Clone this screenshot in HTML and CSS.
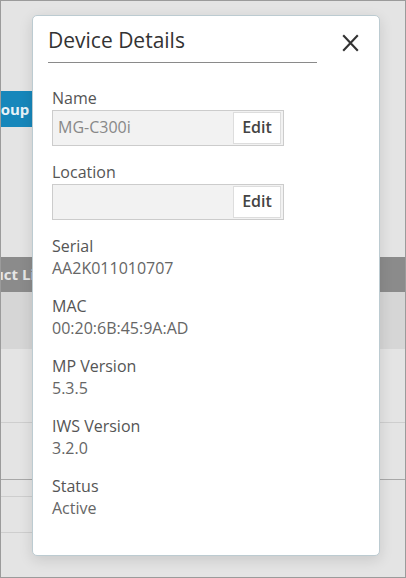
FILE: index.html
```html
<!DOCTYPE html>
<html lang="en">
<head>
<meta charset="utf-8">
<title>Device Details</title>
<link rel="stylesheet" href="styles.css">
</head>
<body>
<div class="page">
  <div class="toolbar"><button class="btn-group">Group</button></div>
  <div class="table">
    <div class="thead"><span class="th">Product Line</span></div>
    <div class="row row-hl"></div>
    <div class="row row-a"></div>
    <div class="row row-b"></div>
    <div class="foot foot1"></div>
    <div class="foot foot2"></div>
  </div>

  <div class="modal">
    <div class="modal-header">
      <h2 class="modal-title">Device Details</h2>
      <button class="close" aria-label="Close">
        <svg width="17" height="18" viewBox="0 0 17 18"><path d="M1.2 1.2 L15.8 16.8 M15.8 1.2 L1.2 16.8" stroke="#333" stroke-width="2.1" fill="none"/></svg>
      </button>
    </div>
    <div class="modal-body">
      <div class="field">
        <div class="label">Name</div>
        <div class="input"><span class="input-text">MG-C300i</span><button class="edit">Edit</button></div>
      </div>
      <div class="field">
        <div class="label">Location</div>
        <div class="input"><span class="input-text"></span><button class="edit">Edit</button></div>
      </div>
      <div class="detail"><div class="label">Serial</div><div class="value">AA2K011010707</div></div>
      <div class="detail"><div class="label">MAC</div><div class="value">00:20:6B:45:9A:AD</div></div>
      <div class="detail"><div class="label">MP Version</div><div class="value">5.3.5</div></div>
      <div class="detail"><div class="label">IWS Version</div><div class="value">3.2.0</div></div>
      <div class="detail"><div class="label">Status</div><div class="value">Active</div></div>
    </div>
  </div>
</div>
</body>
</html>
```

FILE: styles.css
```css
html, body {
  margin: 0;
  padding: 0;
}
body {
  font-family: "Open Sans", "Liberation Sans", sans-serif;
}
.page {
  position: relative;
  width: 406px;
  height: 578px;
  box-sizing: border-box;
  border: 1px solid #9b9b9b;
  background: #e4e4e4;
  overflow: hidden;
}
.toolbar {
  padding-top: 90px;
  height: 36px;
}
.btn-group {
  display: block;
  margin-left: -28px;
  width: 130px;
  height: 36px;
  border: 0;
  padding: 0 0 0 10px;
  text-align: left;
  background: #1787bb;
  color: #e9f3f8;
  font: 700 15px/36px "Open Sans", sans-serif;
}
.table {
  margin-top: 130px;
}
.thead {
  height: 35px;
  background: #8b8b8b;
  white-space: nowrap;
}
.th {
  display: inline-block;
  margin-left: -42px;
  font: 700 15px/35px "Open Sans", sans-serif;
  color: #e6e6e6;
}
.row-hl {
  height: 57px;
  background: #d6d6d6;
}
.row-a {
  height: 73px;
  border-bottom: 1px solid #cecece;
}
.row-b {
  height: 56px;
  border-bottom: 1px solid #a8a8a8;
}
.foot {
  width: 250px;
  border-bottom: 1px solid #cecece;
}
.foot1 { height: 16px; }
.foot2 { height: 35px; }

.modal {
  position: absolute;
  left: 31px;
  top: 14px;
  width: 348px;
  height: 541px;
  box-sizing: border-box;
  background: #fff;
  border: 1px solid #bccbd1;
  border-radius: 5px;
  box-shadow: 0 4px 14px rgba(0, 0, 0, 0.12);
}
.modal-header {
  display: flex;
  align-items: flex-start;
}
.modal-title {
  margin: 0 0 0 15px;
  width: 269px;
  padding: 12px 0 9px;
  border-bottom: 1px solid #8a8a8a;
  font: 400 21px/25px "Open Sans", sans-serif;
  color: #333;
}
.close {
  margin: 18px 20px 0 auto;
  width: 17px;
  height: 18px;
  padding: 0;
  border: 0;
  background: none;
  display: block;
}
.close svg { display: block; }
.modal-body {
  padding: 24px 0 0 19px;
}
.label {
  font-size: 16px;
  line-height: 22px;
  color: #555;
}
.value {
  font-size: 16px;
  line-height: 22px;
  color: #666;
}
.field {
  margin-bottom: 15px;
}
.field .label {
  margin-bottom: 1px;
}
.detail {
  margin-bottom: 16px;
}
.input {
  display: flex;
  align-items: center;
  width: 232px;
  height: 36px;
  box-sizing: border-box;
  border: 1px solid #cccccc;
  background: #f2f2f2;
}
.input-text {
  flex: 1;
  padding: 0 0 2px 5px;
  font-size: 16px;
  line-height: 20px;
  color: #888;
}
.edit {
  width: 48px;
  height: 32px;
  margin-right: 2px;
  box-sizing: border-box;
  border: 1px solid #dddddd;
  background: #fff;
  padding: 0 0 2px;
  font: 600 16px/20px "Open Sans", sans-serif;
  color: #444;
}
```
